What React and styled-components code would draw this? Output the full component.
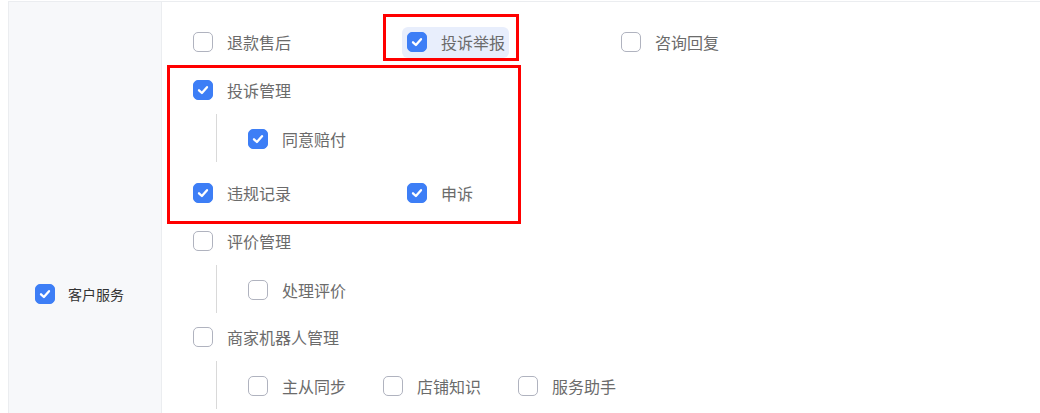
import React from 'react'
import styled, { createGlobalStyle, css } from 'styled-components'

const GlobalStyle = createGlobalStyle`
  html, body {
    margin: 0;
    padding: 0;
    background: #fff;
    overflow: hidden;
    font-family: "Noto Sans CJK SC", "Noto Sans", sans-serif;
  }
`

const Table = styled.div`
  display: flex;
  margin: 1px 0 0 8px;
  min-height: 583px;
  border-top: 1px solid #ebedf0;
  border-left: 1px solid #ebedf0;
`

const LabelCell = styled.div`
  flex: 0 0 153px;
  box-sizing: border-box;
  display: flex;
  align-items: center;
  gap: 13px;
  padding-left: 26px;
  background: #f7f8fa;
  border-right: 1px solid #ebedf0;
`

const LabelText = styled.span`
  font-size: 14px;
  color: #333;
`

const Content = styled.div`
  flex: 1;
  padding: 16px 0 0 26px;
`

const Row = styled.div`
  display: grid;
  grid-template-columns: repeat(3, 214px);
  align-items: center;
  height: 48px;
`

const SubBlock = styled.div`
  display: grid;
  grid-template-columns: repeat(3, 135px);
  align-items: center;
  height: 48px;
  margin-left: 28px;
  margin-bottom: ${p => p.$gap || 0}px;
  padding: 2px 0 0 26px;
  box-sizing: border-box;
  border-left: 1px solid #d9d9d9;
`

const Group = styled.div`
  position: relative;

  &::after {
    content: '';
    position: absolute;
    left: -21px;
    top: -1px;
    width: 354px;
    bottom: -7px;
    box-sizing: border-box;
    border: 3px solid #ff0000;
    pointer-events: none;
  }
`

const Item = styled.label`
  position: relative;
  justify-self: start;
  display: inline-flex;
  align-items: center;
  gap: 14px;
  height: 31px;
  padding: 0 4px 0 5px;
  border-radius: 6px;
  font-size: 16px;
  color: #6b6b6b;
  white-space: nowrap;

  ${p =>
    p.$active &&
    css`
      background: #e8eefc;
    `}

  ${p =>
    p.$marked &&
    css`
      &::after {
        content: '';
        position: absolute;
        left: -19px;
        top: -13px;
        right: -10px;
        bottom: -3px;
        border: 3px solid #ff0000;
        pointer-events: none;
      }
    `}
`

const Box = styled.span`
  flex: 0 0 auto;
  display: inline-flex;
  align-items: center;
  justify-content: center;
  width: 20px;
  height: 20px;
  box-sizing: border-box;
  border-radius: 5px;
  border: 1px solid ${p => (p.$checked ? '#3d7ef6' : '#b0b3bf')};
  background: ${p => (p.$checked ? '#3d7ef6' : '#fff')};
`

const Check = ({ checked }) => (
  <Box $checked={checked}>
    {checked && (
      <svg width="14" height="14" viewBox="0 0 14 14">
        <polyline
          points="3,7.3 5.9,10 11,4.2"
          fill="none"
          stroke="#fff"
          strokeWidth="2.3"
          strokeLinecap="round"
          strokeLinejoin="round"
        />
      </svg>
    )}
  </Box>
)

const Option = ({ label, checked, active, marked }) => (
  <Item $active={active} $marked={marked}>
    <Check checked={checked} />
    <span>{label}</span>
  </Item>
)

export default function App() {
  return (
    <>
      <GlobalStyle />
      <Table>
        <LabelCell>
          <Check checked />
          <LabelText>客户服务</LabelText>
        </LabelCell>
        <Content>
          <Row>
            <Option label="退款售后" />
            <Option label="投诉举报" checked active marked />
            <Option label="咨询回复" />
          </Row>

          <Group>
            <Row>
              <Option label="投诉管理" checked />
            </Row>
            <SubBlock $gap={7}>
              <Option label="同意赔付" checked />
            </SubBlock>
            <Row>
              <Option label="违规记录" checked />
              <Option label="申诉" checked />
            </Row>
          </Group>

          <Row>
            <Option label="评价管理" />
          </Row>
          <SubBlock>
            <Option label="处理评价" />
          </SubBlock>

          <Row>
            <Option label="商家机器人管理" />
          </Row>
          <SubBlock>
            <Option label="主从同步" />
            <Option label="店铺知识" />
            <Option label="服务助手" />
          </SubBlock>
        </Content>
      </Table>
    </>
  )
}
